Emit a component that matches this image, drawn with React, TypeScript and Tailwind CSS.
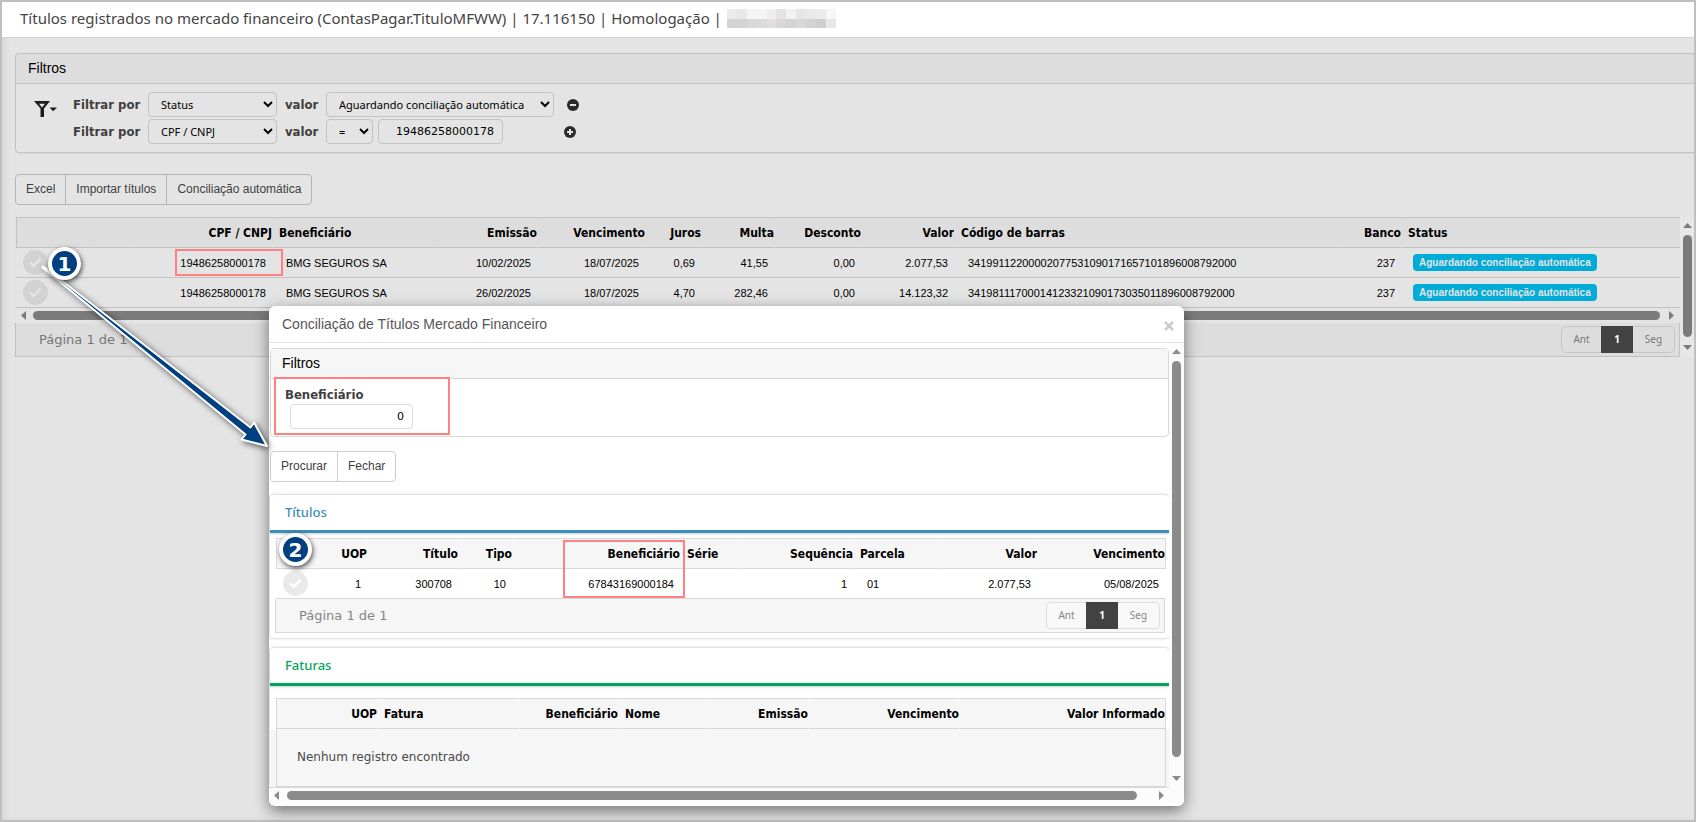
import { useState } from "react";
import type { ReactNode } from "react";

type Column = {
  label: string;
  width?: string;
  align?: "left" | "right";
};

const mainColumns: Column[] = [
  { label: "", width: "w-[38px]" },
  { label: "", width: "w-[38px]" },
  { label: "", width: "w-[39px]" },
  { label: "CPF / CNPJ", width: "w-[142px]" },
  { label: "Beneficiário", width: "w-[164px]", align: "left" },
  { label: "Emissão", width: "w-[101px]" },
  { label: "Vencimento", width: "w-[108px]" },
  { label: "Juros", width: "w-[56px]" },
  { label: "Multa", width: "w-[73px]" },
  { label: "Desconto", width: "w-[87px]" },
  { label: "Valor", width: "w-[93px]" },
  { label: "Código de barras", width: "w-[387px]", align: "left" },
  { label: "Banco", width: "w-[60px]" },
  { label: "Status", align: "left" },
];

const mainRows = [
  ["19486258000178", "BMG SEGUROS SA", "10/02/2025", "18/07/2025", "0,69", "41,55", "0,00", "2.077,53", "34199112200002077531090171657101896008792000", "237"],
  ["19486258000178", "BMG SEGUROS SA", "26/02/2025", "18/07/2025", "4,70", "282,46", "0,00", "14.123,32", "34198111700014123321090173035011896008792000", "237"],
];

const tituloColumns: Column[] = [
  { label: "", width: "w-[39px]" },
  { label: "UOP", width: "w-[53px]" },
  { label: "Título", width: "w-[91px]" },
  { label: "Tipo", width: "w-[54px]" },
  { label: "Beneficiário", width: "w-[168px]" },
  { label: "Série", width: "w-[60px]", align: "left" },
  { label: "Sequência", width: "w-[113px]" },
  { label: "Parcela", width: "w-[84px]", align: "left" },
  { label: "Valor", width: "w-[100px]" },
  { label: "Vencimento" },
];

const tituloRow = ["1", "300708", "10", "67843169000184", "", "1", "01", "2.077,53", "05/08/2025"];

const faturaColumns: Column[] = [
  { label: "UOP", width: "w-[102px]" },
  { label: "Fatura", width: "w-[142px]", align: "left" },
  { label: "Beneficiário", width: "w-[99px]" },
  { label: "Nome", width: "w-[88px]", align: "left" },
  { label: "Emissão", width: "w-[102px]" },
  { label: "Vencimento", width: "w-[151px]" },
  { label: "Valor Informado" },
];

// linha de cima e linha de baixo do nome borrado no cabeçalho
const blurredName = [
  "bg-[#ebebeb]", "bg-[#e8e8e8]", "bg-[#f3f4f4]", "bg-[#f4f5f5]", "bg-[#eeeeec]", "bg-[#e3e3e3]",
  "bg-[#f2f2f0]", "bg-[#e6e6e6]", "bg-[#e9e9e9]", "bg-[#ececec]", "bg-[#f5f6f7]",
  "bg-[#d3d3d3]", "bg-[#d6d4d2]", "bg-[#d7d8da]", "bg-[#dadada]", "bg-[#dfdfdf]", "bg-[#dbd8d4]",
  "bg-[#d4d4d4]", "bg-[#d7d8da]", "bg-[#d3d3d3]", "bg-[#cfcfcf]", "bg-[#e5e8e7]",
];

function Triangle({ dir }: { dir: "up" | "down" | "left" | "right" }) {
  const points = {
    up: "0,7 4.5,2 9,7",
    down: "0,2 9,2 4.5,7",
    left: "7,0 2,4.5 7,9",
    right: "2,0 7,4.5 2,9",
  };
  return (
    <svg width="9" height="9" viewBox="0 0 9 9" className="shrink-0" fill="currentColor">
      <polygon points={points[dir]} />
    </svg>
  );
}

function CheckButton({ dark }: { dark?: boolean }) {
  return (
    <button
      type="button"
      aria-label="Selecionar"
      className={`flex size-[25px] items-center justify-center rounded-full ${
        dark ? "bg-[#d2d2d2] text-[#e4e4e4]" : "bg-[#e9e9e9] text-white"
      }`}
    >
      <svg width="13" height="11" viewBox="0 0 13 11" fill="none" stroke="currentColor" strokeWidth="2.6">
        <path d="M1.2 5.4 L4.6 8.8 L11.6 1.6" />
      </svg>
    </button>
  );
}

function HeadCell({ col, dark }: { col: Column; dark?: boolean }) {
  return (
    <th
      className={`h-[31px] truncate border-t border-b border-r p-0 pl-1.5 font-['DejaVu_Sans_Condensed','DejaVu_Sans',sans-serif] text-xs font-bold text-black first:border-l ${
        dark
          ? "border-y-[#c2c2c2] border-r-[#dddddd] bg-[#dddddd] first:border-l-[#c2c2c2]"
          : "border-y-[#d8d8d8] border-r-[#f6f6f6] bg-[#f6f6f6] first:border-l-[#d8d8d8] last:border-r-[#d8d8d8]"
      } ${col.align === "left" ? "text-left" : "text-right"} ${col.width ?? ""}`}
    >
      {col.label}
    </th>
  );
}

function Cell({ col, dark, children }: { col: Column; dark?: boolean; children?: ReactNode }) {
  return (
    <td
      className={`h-[30px] border-b p-0 pt-0.5 text-[11px] whitespace-nowrap text-black ${
        dark ? "border-[#c2c2c2]" : "border-[#d8d8d8]"
      } ${col.align === "left" ? "pl-[13px] text-left" : "pr-[7px] text-right"}`}
    >
      {children}
    </td>
  );
}

function Pager({ dark }: { dark?: boolean }) {
  const line = dark ? "border-[#c6c6c6] bg-[#dddddd]" : "border-[#dddddd] bg-[#f8f8f8]";
  return (
    <div
      className={`flex h-[34px] items-center justify-between border border-t-0 pr-1 pl-[23px] ${
        dark ? "border-[#c2c2c2] bg-[#dddddd] text-[#777777]" : "border-[#d8d8d8] bg-[#f6f6f6] text-[#858585]"
      }`}
    >
      <span className="font-['DejaVu_Sans',sans-serif] text-[13px]">Página 1 de 1</span>
      <div className="flex h-[27px] font-['Noto_Sans',sans-serif] text-[10px]">
        <button type="button" className={`w-10 rounded-l-[5px] border border-r-0 ${line}`}>
          Ant
        </button>
        <button type="button" className="w-8 bg-[#424242] font-bold text-white">
          1
        </button>
        <button type="button" className={`w-[42px] rounded-r-[5px] border border-l-0 ${line}`}>
          Seg
        </button>
      </div>
    </div>
  );
}

function ButtonGroup({ labels, dark }: { labels: string[]; dark?: boolean }) {
  return (
    <div className="flex">
      {labels.map((label) => (
        <button
          key={label}
          type="button"
          className={`-mr-px h-[31px] border px-2.5 pb-0.5 text-xs text-[#3f3f3f] first:rounded-l last:rounded-r ${
            dark ? "border-[#b4b4b4]" : "border-[#cccccc] bg-white"
          }`}
        >
          {label}
        </button>
      ))}
    </div>
  );
}

const selectClass =
  "h-[25px] rounded border border-[#c2c2c2] bg-[#e4e4e4] pl-2 font-['Noto_Sans',sans-serif] text-[11px] text-black";
const labelClass =
  "font-['DejaVu_Sans_Condensed','DejaVu_Sans',sans-serif] text-[13px] font-bold text-[#3f3f3f]";

function CircleIcon({ plus }: { plus?: boolean }) {
  return (
    <svg width="12" height="12" viewBox="0 0 12 12">
      <circle cx="6" cy="6" r="6" fill="#2b2b2b" />
      <path d={plus ? "M3 6H9M6 3V9" : "M3 6H9"} stroke="#e4e4e4" strokeWidth="2" />
    </svg>
  );
}

function FilterPanel() {
  const [cnpj, setCnpj] = useState("19486258000178");

  return (
    <section className="rounded-l border border-r-0 border-[#c2c2c2] shadow-[0_1px_1px_rgba(0,0,0,0.05)]">
      <h2 className="h-[30px] rounded-tl border-b border-[#c2c2c2] bg-[#dddddd] px-3 text-sm leading-[28px] text-black">
        Filtros
      </h2>
      <div className="flex py-2 pl-[18px]">
        <button type="button" aria-label="Filtros salvos" className="mt-2 h-[18px] w-[23px]">
          <svg width="23" height="18" viewBox="0 0 23 18" fill="#1c1c1c">
            <path fillRule="evenodd" d="M0 1H16L10 8.5V17H6.5V8.5ZM5 3.8L8 7.6L11 3.8Z" />
            <path d="M15.5 7.5H23L19.2 11.3Z" />
          </svg>
        </button>
        <div className="ml-4 flex flex-col gap-0.5">
          <div className="flex items-center">
            <label htmlFor="campo1" className={`w-[75px] ${labelClass}`}>
              Filtrar por
            </label>
            <select id="campo1" className={`w-[129px] ${selectClass}`}>
              <option>Status</option>
              <option>CPF / CNPJ</option>
            </select>
            <label htmlFor="valor1" className={`ml-2 w-[41px] ${labelClass}`}>
              valor
            </label>
            <select id="valor1" className={`w-[228px] ${selectClass}`}>
              <option>Aguardando conciliação automática</option>
            </select>
            <button type="button" aria-label="Remover filtro" className="mt-px ml-[13px]">
              <CircleIcon />
            </button>
          </div>
          <div className="flex items-center">
            <label htmlFor="campo2" className={`w-[75px] ${labelClass}`}>
              Filtrar por
            </label>
            <select id="campo2" defaultValue="CPF / CNPJ" className={`w-[129px] ${selectClass}`}>
              <option>Status</option>
              <option>CPF / CNPJ</option>
            </select>
            <label htmlFor="operador2" className={`ml-2 w-[41px] ${labelClass}`}>
              valor
            </label>
            <select id="operador2" className={`w-[47px] ${selectClass}`}>
              <option>=</option>
            </select>
            <input
              aria-label="Valor do filtro"
              value={cnpj}
              onChange={(e) => setCnpj(e.target.value)}
              className="ml-[5px] h-[25px] w-[125px] rounded border border-[#c2c2c2] bg-[#e4e4e4] px-2 text-right font-['DejaVu_Sans',sans-serif] text-[11px] text-black"
            />
            <button type="button" aria-label="Adicionar filtro" className="mt-px ml-[61px]">
              <CircleIcon plus />
            </button>
          </div>
        </div>
      </div>
    </section>
  );
}

function MainGrid() {
  return (
    <div className="mt-3 flex">
      <div className="min-w-0 flex-1">
        <table className="ml-px w-full table-fixed border-separate border-spacing-0">
          <thead>
            <tr>
              {mainColumns.map((col, i) => (
                <HeadCell key={i} col={col} dark />
              ))}
            </tr>
          </thead>
          <tbody>
            {mainRows.map((row) => (
              <tr key={row[8]}>
                <td colSpan={3} className="h-[30px] border-b border-[#c2c2c2] p-0 pl-[7px]">
                  <CheckButton dark />
                </td>
                {row.map((value, i) => (
                  <Cell key={i} col={mainColumns[i + 3]} dark>
                    {value}
                  </Cell>
                ))}
                <td className="border-b border-[#c2c2c2] p-0 pl-[11px]">
                  <span className="block h-[17px] w-fit rounded-sm bg-[#00abd7] px-1.5 text-[10px] leading-[17px] font-bold text-[#e4e4e4]">
                    Aguardando conciliação automática
                  </span>
                </td>
              </tr>
            ))}
          </tbody>
        </table>
        <div className="flex h-[15px] items-center justify-between px-1 text-[#7b7b7b]">
          <Triangle dir="left" />
          <div className="mr-[7px] ml-[5px] h-[9px] flex-1 rounded-full bg-[#7b7b7b]" />
          <Triangle dir="right" />
        </div>
        <Pager dark />
      </div>
      <div className="flex w-[14px] flex-col items-center bg-[#e7e7e7] pt-1 text-[#7b7b7b]">
        <Triangle dir="up" />
        <div className="mt-[5px] h-[102px] w-[9px] rounded-full bg-[#7b7b7b]" />
        <div className="mt-[6px]">
          <Triangle dir="down" />
        </div>
      </div>
    </div>
  );
}

function Box({ title, color, children }: { title: string; color: string; children: ReactNode }) {
  return (
    <section className="rounded bg-white shadow-[0_0_3px_rgba(0,0,0,0.3)]">
      <h3
        className={`h-[38px] border-b-[3px] pl-[15px] font-['Noto_Sans',sans-serif] text-[13px] leading-[34px] font-medium shadow-[0_1px_2px_rgba(0,0,0,0.2)] ${color}`}
      >
        {title}
      </h3>
      {children}
    </section>
  );
}

function ConciliacaoModal() {
  const [beneficiario, setBeneficiario] = useState("0");

  return (
    <div
      role="dialog"
      aria-label="Conciliação de Títulos Mercado Financeiro"
      className="absolute top-[306px] left-[269px] w-[915px] overflow-hidden rounded-md bg-white shadow-[0_5px_15px_rgba(0,0,0,0.5)]"
    >
      <header className="flex h-[37px] items-center justify-between border-b border-[#e5e5e5] pr-2 pl-[13px]">
        <h2 className="text-sm text-[#555555]">Conciliação de Títulos Mercado Financeiro</h2>
        <button type="button" aria-label="Fechar" className="mt-1 p-0.5">
          <svg width="10" height="10" viewBox="0 0 10 10" stroke="#cccccc" strokeWidth="2.6">
            <path d="M1 1L9 9M9 1L1 9" />
          </svg>
        </button>
      </header>

      <div className="flex">
        <div className="min-w-0 flex-1 overflow-hidden border-b border-[#d8d8d8] pt-[5px] pl-px">
          <section className="rounded border border-[#d8d8d8]">
            <h3 className="h-[30px] border-b border-[#d8d8d8] bg-[#f6f6f6] px-[11px] text-sm leading-[28px] text-black">
              Filtros
            </h3>
            <div className="flex h-[57px] flex-col items-start pt-1.5 pl-[14px]">
              <label htmlFor="beneficiario" className={`leading-[19px] ${labelClass}`}>
                Beneficiário
              </label>
              <input
                id="beneficiario"
                value={beneficiario}
                onChange={(e) => setBeneficiario(e.target.value)}
                className="ml-[5px] h-[25px] w-[123px] shrink-0 rounded border border-[#dddddd] bg-white px-2 text-right font-['DejaVu_Sans',sans-serif] text-[11px] text-black"
              />
            </div>
          </section>

          <div className="mt-3.5 mb-[13px]">
            <ButtonGroup labels={["Procurar", "Fechar"]} />
          </div>

          <Box title="Títulos" color="border-[#3c8dbc] text-[#3c8dbc]">
            <div className="pt-[5px] pr-1 pb-[5px] pl-[5px]">
              <table className="ml-px w-full table-fixed border-separate border-spacing-0">
                <thead>
                  <tr>
                    {tituloColumns.map((col, i) => (
                      <HeadCell key={i} col={col} />
                    ))}
                  </tr>
                </thead>
                <tbody>
                  <tr>
                    <td className="h-[30px] border-b border-[#d8d8d8] p-0 pl-[7px]">
                      <CheckButton />
                    </td>
                    {tituloRow.map((value, i) => (
                      <Cell key={i} col={tituloColumns[i + 1]}>
                        {value}
                      </Cell>
                    ))}
                  </tr>
                </tbody>
              </table>
              <Pager />
            </div>
          </Box>

          <div className="mt-2.5">
            <Box title="Faturas" color="border-[#00a65a] text-[#00a65a]">
              <div className="pt-3 pr-[3px] pl-1.5">
                <table className="w-full table-fixed border-separate border-spacing-0">
                  <thead>
                    <tr>
                      {faturaColumns.map((col, i) => (
                        <HeadCell key={i} col={col} />
                      ))}
                    </tr>
                  </thead>
                </table>
              </div>
              <div className="bg-[#f6f6f6] pr-[3px] pl-1.5">
                <p className="h-[58px] border border-t-0 border-[#d8d8d8] pl-5 font-['DejaVu_Sans',sans-serif] text-xs leading-[57px] text-[#4a4a4a]">
                  Nenhum registro encontrado
                </p>
              </div>
            </Box>
          </div>
        </div>

        <div className="flex w-[15px] flex-col items-center bg-[#fcfcfc] pt-1 text-[#8b8b8b]">
          <Triangle dir="up" />
          <div className="mt-[5px] mb-[17px] w-[9px] flex-1 rounded-full bg-[#8b8b8b]" />
          <div className="mb-[5px] flex">
            <Triangle dir="down" />
          </div>
        </div>
      </div>

      <div className="mb-[3px] flex h-[15px] items-center bg-[#fcfcfc] pl-[3px] text-[#8b8b8b]">
        <Triangle dir="left" />
        <div className="mr-5 ml-1.5 h-[9px] flex-1 rounded-full bg-[#8b8b8b]" />
        <Triangle dir="right" />
        <div className="w-[18px]" />
      </div>
    </div>
  );
}

// Marcações do passo a passo: caixas vermelhas, seta e números
function Badge({ n, className }: { n: number; className: string }) {
  return (
    <span
      className={`absolute flex size-[33px] items-center justify-center rounded-full border-4 border-white bg-[#003f80] font-['DejaVu_Sans',sans-serif] text-xl font-bold text-white shadow-[1px_2px_5px_rgba(0,0,0,0.7)] ${className}`}
    >
      {n}
    </span>
  );
}

function Annotations() {
  return (
    <div className="pointer-events-none absolute inset-0">
      <div className="absolute top-[249px] left-[175px] h-[27px] w-[108px] border-2 border-[#ff8080]" />
      <div className="absolute top-[377px] left-[274px] h-[58px] w-[176px] border-2 border-[#ff8080]" />
      <div className="absolute top-[540px] left-[563px] h-[58px] w-[122px] border-2 border-[#ff8080]" />
      <svg width="300" height="470" viewBox="0 0 300 470" className="absolute top-0 left-0 drop-shadow-[2px_2px_3px_rgba(0,0,0,0.6)]">
        <path
          d="M42.5 267.5 L43.5 266.5 L250.5 427.5 L254 422.5 L267 446 L241.5 439.5 L245.5 434.5 Z"
          fill="#003f80"
          stroke="#ffffff"
          strokeWidth="2"
          strokeLinejoin="round"
        />
      </svg>
      <Badge n={1} className="top-[247px] left-[48px]" />
      <Badge n={2} className="top-[533px] left-[279px]" />
    </div>
  );
}

export default function App() {
  return (
    <div className="relative flex min-h-screen overflow-hidden bg-[#e4e4e4] font-['Liberation_Sans',Arial,sans-serif]">
      <main className="min-w-0 flex-1 border-2 border-[#bfbfbf] shadow-[inset_4px_0_5px_rgba(0,0,0,0.05)]">
        <header className="flex h-9 items-center border-b border-[#d4d4d4] bg-white pb-0.5 pl-[18px]">
          <h1 className="font-['Noto_Sans',sans-serif] text-[15px] whitespace-nowrap text-[#444444]">
            Títulos registrados no mercado financeiro (ContasPagar.TituloMFWW) | 17.116150 | Homologação |
          </h1>
          <div aria-hidden className="ml-[5px] grid h-[19px] w-[109px] grid-cols-11">
            {blurredName.map((bg, i) => (
              <span key={i} className={bg} />
            ))}
          </div>
        </header>
        <div className="pt-[15px] pl-[13px]">
          <FilterPanel />
          <div className="mt-[21px]">
            <ButtonGroup labels={["Excel", "Importar títulos", "Conciliação automática"]} dark />
          </div>
          <MainGrid />
        </div>
      </main>
      <ConciliacaoModal />
      <Annotations />
    </div>
  );
}
